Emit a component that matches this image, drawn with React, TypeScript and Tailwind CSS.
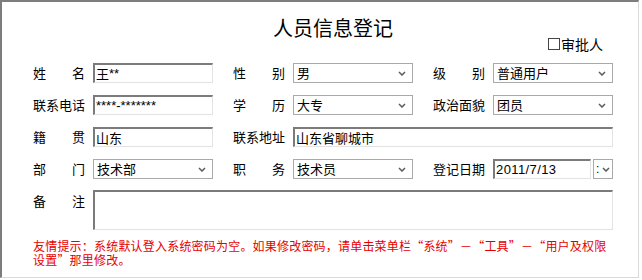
import type { ReactNode } from "react";

function Chevron() {
  return (
    <svg width="8" height="5" viewBox="0 0 8 5" className="block shrink-0">
      <path d="M1 1 L4 4 L7 1" stroke="#5a5a5a" strokeWidth="1.5" fill="none" />
    </svg>
  );
}

function Label({ text }: { text: string }) {
  return (
    <div className="flex w-[52px] shrink-0 justify-between text-[13px] leading-[20px] text-black">
      {text.split("").map((c, i) => (
        <span key={i}>{c}</span>
      ))}
    </div>
  );
}

function Field({ label, children }: { label: string; children: ReactNode }) {
  return (
    <div className="flex shrink-0 items-center gap-[8px]">
      <Label text={label} />
      {children}
    </div>
  );
}

function TextInput({ value, width = "w-[120px]", latin = false }: { value: ReactNode; width?: string; latin?: boolean }) {
  return (
    <div
      className={`flex h-[20px] ${width} shrink-0 items-center overflow-hidden border-t-2 border-l-2 border-r border-b border-t-[#7b7b7b] border-l-[#7b7b7b] border-r-[#e3e3e3] border-b-[#e3e3e3] bg-white pl-[1px] ${
        latin ? "font-['Liberation_Sans',sans-serif] text-[13px]" : "text-[13px]"
      } leading-[18px] text-black`}
    >
      {value}
    </div>
  );
}

function Select({ value }: { value: string }) {
  return (
    <div className="flex h-[20px] w-[120px] shrink-0 items-center justify-between border border-[#a9a9a9] bg-white pl-[3px] pr-[6px] text-[13px] leading-[18px] text-black">
      <span>{value}</span>
      <Chevron />
    </div>
  );
}

export default function App() {
  return (
    <div className="h-[280px] w-[642px] overflow-hidden bg-white font-['Noto_Sans_CJK_SC','Liberation_Sans',sans-serif]">
      <div className="h-[278px] w-[639px] border-t-2 border-l-2 border-r border-b border-t-[#7d7d7d] border-l-[#7d7d7d] border-r-[#d9d9d9] border-b-[#d9d9d9] pt-[16px]">
        <div className="h-[20px] pl-[26px] text-center text-[20px] leading-[20px] text-black">人员信息登记</div>

        <div className="-mt-[1px] flex h-[14px] items-center justify-end gap-[1px] pr-[35px] text-[14px] leading-[14px] text-black">
          <span className="h-[12px] w-[12px] border border-[#444444] bg-white" />
          <span>审批人</span>
        </div>

        <div className="mt-[12px] flex flex-col gap-[12px] pl-[31px]">
          <div className="flex h-[20px] items-center gap-[20px]">
            <Field label="姓名">
              <TextInput
                value={
                  <>
                    <span>王</span>
                    <span className="font-['Liberation_Sans',sans-serif] text-[13px]">**</span>
                  </>
                }
              />
            </Field>
            <Field label="性别">
              <Select value="男" />
            </Field>
            <Field label="级别">
              <Select value="普通用户" />
            </Field>
          </div>

          <div className="flex h-[20px] items-center gap-[20px]">
            <Field label="联系电话">
              <TextInput value="****-*******" latin />
            </Field>
            <Field label="学历">
              <Select value="大专" />
            </Field>
            <Field label="政治面貌">
              <Select value="团员" />
            </Field>
          </div>

          <div className="flex h-[20px] items-center gap-[20px]">
            <Field label="籍贯">
              <TextInput value="山东" />
            </Field>
            <Field label="联系地址">
              <TextInput value="山东省聊城市" width="w-[320px]" />
            </Field>
          </div>

          <div className="flex h-[20px] items-center gap-[20px]">
            <Field label="部门">
              <Select value="技术部" />
            </Field>
            <Field label="职务">
              <Select value="技术员" />
            </Field>
            <Field label="登记日期">
              <div className="flex shrink-0 items-center gap-[2px]">
                <div className="flex h-[20px] w-[98px] items-center border-t-2 border-l-2 border-r border-b border-t-[#7b7b7b] border-l-[#7b7b7b] border-r-[#e3e3e3] border-b-[#e3e3e3] bg-white pl-[1px] font-['Liberation_Sans',sans-serif] text-[13px] leading-[18px] tracking-[0.4px] text-black">
                  2011/7/13
                </div>
                <div className="flex h-[20px] w-[20px] shrink-0 items-center justify-between border border-[#a9a9a9] bg-white pl-[2px] pr-[2px] font-['Liberation_Sans',sans-serif] text-[12px] leading-[18px] text-black">
                  <span>:</span>
                  <Chevron />
                </div>
              </div>
            </Field>
          </div>

          <div className="-mt-[1px] flex items-start gap-[8px]">
            <div className="pt-[1px]">
              <Label text="备注" />
            </div>
            <div className="h-[40px] w-[520px] border-t-2 border-l-2 border-r border-b border-t-[#7b7b7b] border-l-[#7b7b7b] border-r-[#e3e3e3] border-b-[#e3e3e3] bg-white" />
          </div>
        </div>

        <div className="mt-[9px] pl-[31px] font-['Noto_Sans_CJK_SC',sans-serif] text-[12px] leading-[14px] tracking-[0.2px] text-[#e60000]">
          <div className="whitespace-nowrap">
            友情提示：系统默认登入系统密码为空。如果修改密码，请单击菜单栏“系统”－“工具”－“用户及权限
          </div>
          <div className="whitespace-nowrap">设置”那里修改。</div>
        </div>
      </div>
    </div>
  );
}
